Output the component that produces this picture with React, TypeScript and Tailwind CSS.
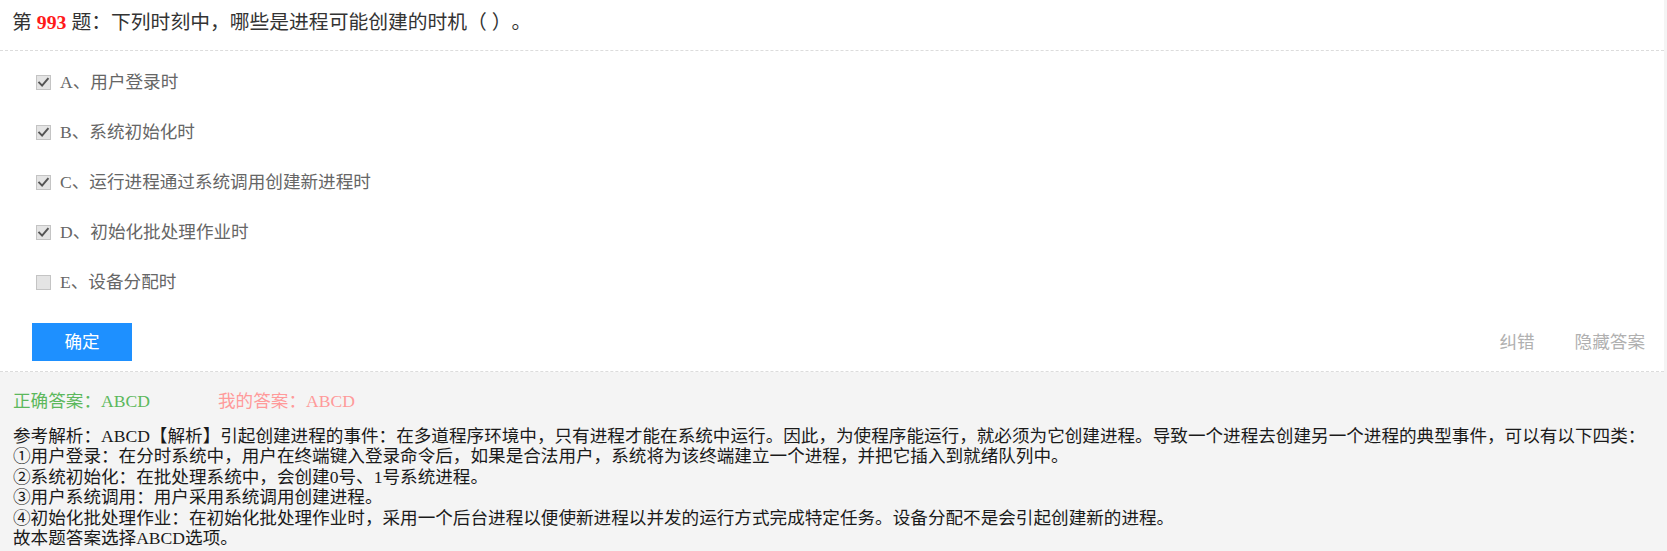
import React from "react";

const FONT = { fontFamily: '"Liberation Serif", "Noto Sans CJK SC", serif' };

function Box({ checked }: { checked: boolean }) {
  return (
    <svg width="15" height="15" viewBox="0 0 15 15" className="shrink-0">
      <rect x="0.5" y="0.5" width="14" height="14" fill="#e4e4e4" stroke="#c4c4c4" />
      {checked && (
        <path d="M3.2 7.6 L6.1 10.6 L11.8 3.8" fill="none" stroke="#555" strokeWidth="2" strokeLinecap="square" />
      )}
    </svg>
  );
}

const options = [
  { k: "A", t: "用户登录时", c: true },
  { k: "B", t: "系统初始化时", c: true },
  { k: "C", t: "运行进程通过系统调用创建新进程时", c: true },
  { k: "D", t: "初始化批处理作业时", c: true },
  { k: "E", t: "设备分配时", c: false },
];

const analysis = [
  "参考解析：ABCD【解析】引起创建进程的事件：在多道程序环境中，只有进程才能在系统中运行。因此，为使程序能运行，就必须为它创建进程。导致一个进程去创建另一个进程的典型事件，可以有以下四类：",
  "①用户登录：在分时系统中，用户在终端键入登录命令后，如果是合法用户，系统将为该终端建立一个进程，并把它插入到就绪队列中。",
  "②系统初始化：在批处理系统中，会创建0号、1号系统进程。",
  "③用户系统调用：用户采用系统调用创建进程。",
  "④初始化批处理作业：在初始化批处理作业时，采用一个后台进程以便使新进程以并发的运行方式完成特定任务。设备分配不是会引起创建新的进程。",
  "故本题答案选择ABCD选项。",
];

export default function App() {
  return (
    <div className="w-full min-h-[551px] bg-[#f4f4f4]" style={FONT}>
      <div className="w-[1664px] bg-white">
        <div className="h-[51px] border-b border-dashed border-[#dcdcdc] px-[12px] pb-[4px] flex items-center text-[19.8px] text-[#333] whitespace-pre [text-spacing-trim:space-all]">
          <span>第</span>
          <span className="font-bold text-[#ff1a1a] mx-[5px]">993</span>
          <span>题：下列时刻中，哪些是进程可能创建的时机（ ）。</span>
        </div>
        <div className="pt-[6px] pl-[36px]">
          {options.map((o) => (
            <div key={o.k} className="h-[50px] flex items-center gap-[9px] text-[17.6px] text-[#666]">
              <Box checked={o.c} />
              <span>
                {o.k}、{o.t}
              </span>
            </div>
          ))}
        </div>
        <div className="mt-[16px] pb-[10px] border-b border-dashed border-[#dcdcdc] pl-[32px] pr-[19px] flex items-center justify-between">
          <button className="w-[100px] h-[38px] bg-[#1e90ff] text-white text-[17.6px]">确定</button>
          <div className="flex items-center gap-[40px] text-[17.6px] text-[#b0b0b0]">
            <span>纠错</span>
            <span>隐藏答案</span>
          </div>
        </div>
      </div>
      <div className="px-[13px] pt-[19px] pb-[6px]">
        <div className="flex leading-[20px] text-[17.6px] whitespace-nowrap">
          <span className="text-[#5cb85c] w-[205px]">正确答案：ABCD</span>
          <span className="text-[#ff9a9a]">我的答案：ABCD</span>
        </div>
        <div className="mt-[15px] text-[17.6px] leading-[20.4px] text-[#1a1a1a]">
          {analysis.map((l, i) => (
            <div key={i} className="whitespace-nowrap">
              {l}
            </div>
          ))}
        </div>
      </div>
    </div>
  );
}
